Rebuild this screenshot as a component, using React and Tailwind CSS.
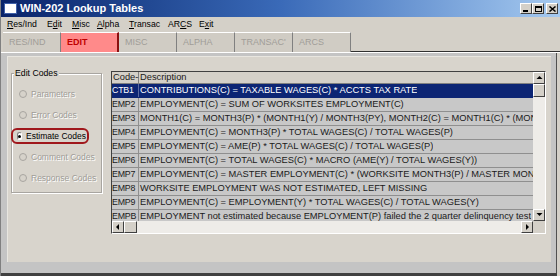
import React from 'react';

const menus = [
    { pre: '', key: 'R', post: 'es/Ind', w: 'w-[40px]' },
    { pre: 'E', key: 'd', post: 'it', w: 'w-[25px]' },
    { pre: '', key: 'M', post: 'isc', w: 'w-[25px]' },
    { pre: '', key: 'A', post: 'lpha', w: 'w-[32px]' },
    { pre: '', key: 'T', post: 'ransac', w: 'w-[39px]' },
    { pre: 'AR', key: 'C', post: 'S', w: 'w-[31px]' },
    { pre: 'E', key: 'x', post: 'it', w: 'w-[20px]' },
];

const tabs = ['RES/IND', 'EDIT', 'MISC', 'ALPHA', "TRANSAC'", 'ARCS'];

const options = [
    { label: 'Parameters' },
    { label: 'Error Codes' },
    { label: 'Estimate Codes', active: true },
    { label: 'Comment Codes' },
    { label: 'Response Codes' },
];

const rows = [
    ['CTB1', 'CONTRIBUTIONS(C) = TAXABLE WAGES(C) * ACCTS TAX RATE'],
    ['EMP2', 'EMPLOYMENT(C) = SUM OF WORKSITES EMPLOYMENT(C)'],
    ['EMP3', 'MONTH1(C) = MONTH3(P) * (MONTH1(Y) / MONTH3(PY), MONTH2(C) = MONTH1(C) * (MONTH2(Y)'],
    ['EMP4', 'EMPLOYMENT(C) = MONTH3(P) * TOTAL WAGES(C) / TOTAL WAGES(P)'],
    ['EMP5', 'EMPLOYMENT(C) = AME(P) * TOTAL WAGES(C) / TOTAL WAGES(P)'],
    ['EMP6', 'EMPLOYMENT(C) = TOTAL WAGES(C) * MACRO (AME(Y) / TOTAL WAGES(Y))'],
    ['EMP7', 'EMPLOYMENT(C) = MASTER EMPLOYMENT(C) * (WORKSITE MONTH3(P) / MASTER MONTH3(P))'],
    ['EMP8', 'WORKSITE EMPLOYMENT WAS NOT ESTIMATED, LEFT MISSING'],
    ['EMP9', 'EMPLOYMENT(C) = EMPLOYMENT(Y) * TOTAL WAGES(C) / TOTAL WAGES(Y)'],
    ['EMPB', 'EMPLOYMENT not estimated because EMPLOYMENT(P) failed the 2 quarter delinquency test'],
];

const WinButton = ({ children, className = '' }) => (
    <div className={`w-[12px] h-[11px] bg-[#d4d0c8] border border-t-white border-l-white border-r-[#404040] border-b-[#404040] flex items-center justify-center text-black ${className}`}>
        {children}
    </div>
);

const ScrollArrow = ({ dir }) => {
    const pts = {
        up: '1.5,5 4.5,2 7.5,5',
        down: '1.5,2 4.5,5 7.5,2',
        left: '5,1 2,4 5,7',
        right: '3,1 6,4 3,7',
    };
    return (
        <div className="w-[12px] h-[12px] bg-[#d4d0c8] border border-t-white border-l-white border-r-[#404040] border-b-[#404040] flex items-center justify-center">
            <svg width="9" height="8" viewBox="0 0 9 8"><polygon points={pts[dir]} fill="#000" /></svg>
        </div>
    );
};

const Radio = ({ label, active }) => (
    <div className={`flex items-center h-[16px] ${active ? 'border-2 border-[#a0181c] rounded-[6px] -ml-[1px] pl-[4px] pr-[3px] w-[78px]' : 'pl-[7px]'}`}>
        <span className={`w-[8px] h-[8px] rounded-full border flex items-center justify-center ${active ? 'bg-white border-t-[#808080] border-l-[#808080] border-r-white border-b-white' : 'bg-[#d6d2ca] border-[#a8a5a0]'}`}>
            {active && <span className="w-[3px] h-[3px] rounded-full bg-black" />}
        </span>
        <span className={`ml-[4px] text-[8.5px] whitespace-nowrap ${active ? 'text-black' : 'text-[#a09d98] [text-shadow:1px_1px_0_#ffffff]'}`}>
            {label}
        </span>
    </div>
);

export default function App() {
    return (
        <div className="w-[560px] h-[276px] bg-[#d4d0c8] flex flex-col overflow-hidden font-['Liberation_Sans',Arial,sans-serif] border-l border-[#808080]">
            {/* title bar */}
            <div className="h-[17px] flex items-center pl-[3px] pr-[2px] bg-gradient-to-r from-[#0a246a] via-[#3a6ab8] to-[#a6caf0]">
                <div className="w-[13px] h-[11px] bg-white border border-[#3e5fa8]" />
                <span className="ml-[3px] text-white font-bold text-[11px]">WIN-202 Lookup Tables</span>
                <div className="ml-auto flex items-center">
                    <WinButton>
                        <span className="block w-[5px] h-[2px] bg-black mt-[5px] -ml-[1px]" />
                    </WinButton>
                    <WinButton>
                        <span className="block w-[7px] h-[6px] border border-black border-t-2" />
                    </WinButton>
                    <WinButton className="ml-[2px]">
                        <svg width="7" height="6" viewBox="0 0 7 6"><path d="M0.5 0.5 L6.5 5.5 M6.5 0.5 L0.5 5.5" stroke="#000" strokeWidth="1.5" /></svg>
                    </WinButton>
                </div>
            </div>

            {/* menu bar */}
            <div className="h-[15px] flex items-center pl-[6px] text-[8.7px] text-black">
                {menus.map((m, i) => (
                    <span key={i} className={`${m.w} shrink-0 whitespace-nowrap`}>{m.pre}<span className="underline">{m.key}</span>{m.post}</span>
                ))}
            </div>

            {/* tabs */}
            <div className="h-[20px] flex items-stretch pl-[2px]">
                {tabs.map((t, i) => (
                    <div
                        key={t}
                        className={`w-[58px] flex items-center pl-[6px] text-[9px] border-t border-t-white ${t === 'EDIT' ? 'bg-[#ff8a8a] text-[#c00000] font-bold border-r-2 border-r-[#8a1010]' : 'bg-[#d0ccc4] text-[#a09d98] border-r border-r-[#808080]'} ${i === tabs.length - 1 ? 'border-r-[#303030]' : ''}`}
                    >
                        {t}
                    </div>
                ))}
                <div className="flex-1 border-b border-[#303030]" />
            </div>

            {/* panel */}
            <div className="flex-1 flex flex-col border-t border-white pr-[3px]">
                <div className="flex-1 flex flex-col bg-[#c4c4c4] pt-[3px] pr-[5px] pb-[11px] pl-[6px] border-r border-[#505050]">
                    <div className="flex-1 bg-[#d8d4cc] border-t border-l border-[#e8e6e0] flex items-start pt-[14px] pl-[3px] gap-[9px]">
                        {/* group box */}
                        <div className="relative mt-[2px] w-[91px] h-[120px] border border-[#a8a5a0] shadow-[inset_1px_1px_0_#ffffff,1px_1px_0_#ffffff] flex flex-col gap-[5px] pt-[12px]">
                            <span className="absolute -top-[6px] left-[2px] px-[1px] bg-[#d8d4cc] text-[8.7px] text-black leading-[10px]">Edit Codes</span>
                            {options.map((o) => (
                                <Radio key={o.label} label={o.label} active={o.active} />
                            ))}
                        </div>

                        {/* grid */}
                        <div className="w-[435px] h-[163px] border border-t-[#404040] border-l-[#404040] border-r-white border-b-white flex bg-[#c8c8c8]">
                            <div className="flex-1 min-w-0 flex flex-col">
                                <div className="flex-1 overflow-hidden text-[9.3px] text-[#1a1a1a]">
                                    <div className="h-[12px] flex bg-[#d4d0c8] border-b border-[#808080] leading-[11px]">
                                        <div className="w-[27px] pl-[1px] border-r border-[#808080] shrink-0">Code-</div>
                                        <div className="pl-[1px]">Description</div>
                                    </div>
                                    {rows.map(([code, desc], i) => (
                                        <div
                                            key={code + i}
                                            className={`h-[14px] flex items-center leading-[13px] border-b ${i === 0 ? 'bg-[#0c2574] text-white border-[#0c2574]' : 'bg-[#c8c8c8] border-[#8f8f8f]'}`}
                                        >
                                            <div className={`w-[27px] h-full shrink-0 flex items-center text-[8.8px] tracking-[-0.2px] border-r ${i === 0 ? 'border-[#5a6aa0]' : 'border-[#8f8f8f]'}`}>{code}</div>
                                            <div className="pl-[1px] whitespace-nowrap overflow-hidden">{desc}</div>
                                        </div>
                                    ))}
                                </div>
                                {/* horizontal scrollbar */}
                                <div className="h-[12px] flex bg-[#eeece8]">
                                    <ScrollArrow dir="left" />
                                    <div className="w-[13px] h-[12px] bg-[#d4d0c8] border border-t-white border-l-white border-r-[#404040] border-b-[#404040]" />
                                    <div className="flex-1" />
                                    <ScrollArrow dir="right" />
                                </div>
                            </div>
                            {/* vertical scrollbar */}
                            <div className="w-[12px] flex flex-col bg-[#eeece8]">
                                <ScrollArrow dir="up" />
                                <div className="h-[13px] bg-[#d4d0c8] border border-t-white border-l-white border-r-[#404040] border-b-[#404040]" />
                                <div className="flex-1" />
                                <ScrollArrow dir="down" />
                                <div className="h-[12px] bg-[#d4d0c8]" />
                            </div>
                        </div>
                    </div>
                </div>
                <div className="h-[3px] bg-[#404040]" />
            </div>
        </div>
    );
}
